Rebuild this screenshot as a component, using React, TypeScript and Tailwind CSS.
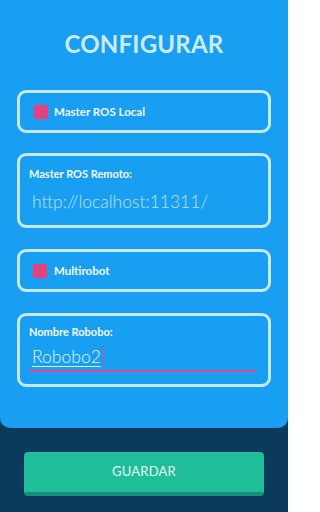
import React from "react";

function Check() {
  return (
    <div className="w-[14px] h-[14px] bg-[#e8407e] flex items-center justify-center">
      <svg width="10" height="10" viewBox="0 0 10 10">
        <path d="M1.5 5.5 L4 8 L8.5 2" fill="none" stroke="#c0508f" strokeWidth="1.4" />
      </svg>
    </div>
  );
}

export default function App() {
  return (
    <div className="w-[288px] h-[512px] bg-[#0b3a5c] font-['Lato','Noto_Sans',sans-serif] overflow-hidden">
      <div className="h-[428px] bg-[#189ff2] rounded-b-[10px] px-[17px] flex flex-col">
        <div className="h-[90px] flex items-center justify-center pb-[2px]">
          <h1 className="text-[24px] font-bold text-[#cdeafc] tracking-[0.2px]">CONFIGURAR</h1>
        </div>
        <div className="h-[43px] border-[3px] border-[#c6eafd] rounded-[9px] flex items-center pl-[14px] gap-[6px]">
          <Check />
          <span className="text-[11.5px] font-bold text-[#f2f9ff]">Master ROS Local</span>
        </div>
        <div className="h-[75px] mt-[20px] border-[3px] border-[#c6eafd] rounded-[9px] flex flex-col pl-[9px] pt-[10px]">
          <span className="text-[11px] font-bold text-[#f2f9ff] leading-[16px]">Master ROS Remoto:</span>
          <span className="text-[17.5px] font-light text-[#bfe0f8] leading-[22px] mt-[9px] pl-[3px]">http://localhost:11311/</span>
        </div>
        <div className="h-[43px] mt-[21px] border-[3px] border-[#c6eafd] rounded-[9px] flex items-center pl-[13px] gap-[7px]">
          <Check />
          <span className="text-[11.5px] font-bold text-[#f2f9ff]">Multirobot</span>
        </div>
        <div className="h-[74px] mt-[21px] border-[3px] border-[#c6eafd] rounded-[9px] flex flex-col pl-[9px] pr-[12px] pt-[8px]">
          <span className="text-[11px] font-bold text-[#f2f9ff] leading-[16px]">Nombre Robobo:</span>
          <div className="mt-[6px] pl-[3px] border-b-[2px] border-[#e2478a] pb-[2px] flex items-center">
            <span className="text-[17.5px] font-light text-[#e8f5ff] leading-[22px] underline underline-offset-[3px] decoration-[1px]">Robobo2</span>
            <span className="w-[1.5px] h-[20px] bg-[#e2478a] ml-[1px]" />
          </div>
        </div>
      </div>
      <div className="px-[24px] pt-[24px]">
        <div className="h-[44px] bg-[#1fbe99] rounded-[4px] border-b-[4px] border-[#168f7f] flex items-center justify-center">
          <span className="text-[13px] text-[#e8fbf6] tracking-[0.2px]">GUARDAR</span>
        </div>
      </div>
    </div>
  );
}
